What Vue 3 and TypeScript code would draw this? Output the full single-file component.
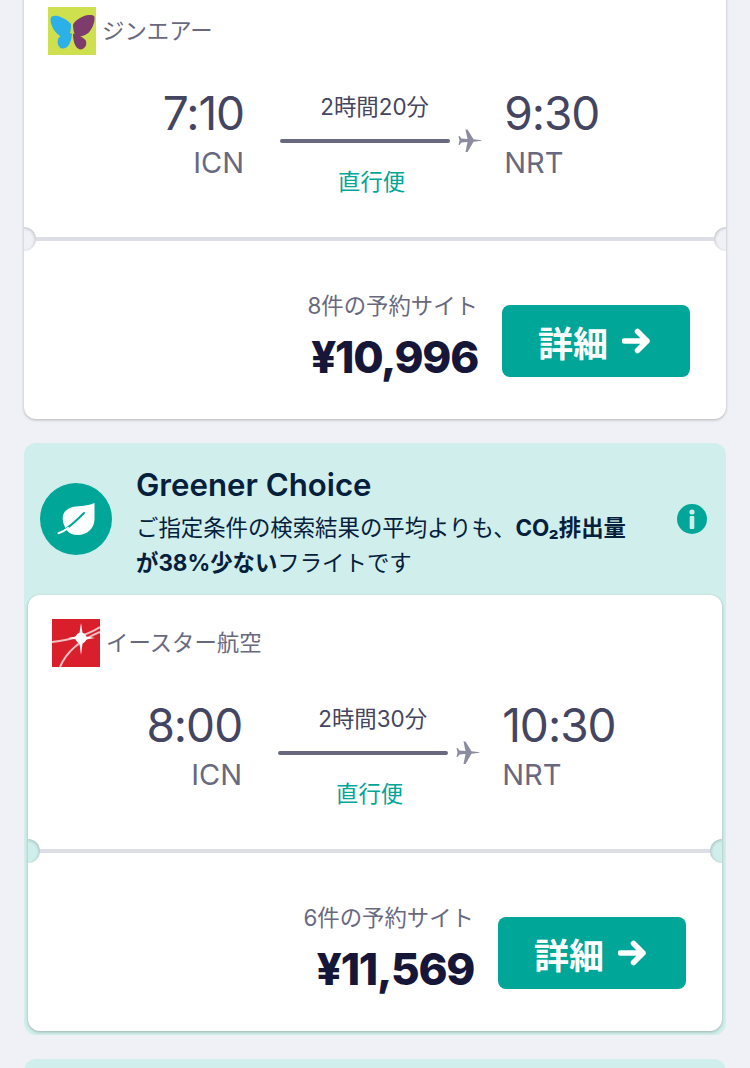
<script setup lang="ts">
type Flight = {
  logo: "jin" | "eastar";
  airline: string;
  depart: string;
  arrive: string;
  duration: string;
  sites: string;
  price: string;
  greener: boolean;
};

const flights: Flight[] = [
  {
    logo: "jin",
    airline: "ジンエアー",
    depart: "7:10",
    arrive: "9:30",
    duration: "2時間20分",
    sites: "8件の予約サイト",
    price: "¥10,996",
    greener: false,
  },
  {
    logo: "eastar",
    airline: "イースター航空",
    depart: "8:00",
    arrive: "10:30",
    duration: "2時間30分",
    sites: "6件の予約サイト",
    price: "¥11,569",
    greener: true,
  },
];
</script>

<template>
  <main class="page">
    <div class="results">
      <section v-for="f in flights" :key="f.airline" class="result" :class="{ greener: f.greener }">
        <header v-if="f.greener" class="green-head">
          <div class="leaf-badge">
            <svg width="72" height="72" viewBox="0 0 72 72" aria-hidden="true">
              <path d="M54.500 20V36C54.500 45.500 47 52 38 52C33 52 29.500 50.500 27 47.500C24.500 44 22.500 39.500 22.700 35C23 29 27 25.500 33 24C40 22.300 48 23.500 54.500 20Z" fill="#fff" />
              <path d="M44 30C38 36 32 42 25 46.500" fill="none" stroke="#00a698" stroke-width="2" stroke-linecap="round" />
              <path d="M18.500 50.200C22 49.200 25 47.500 28 45" fill="none" stroke="#fff" stroke-width="2" stroke-linecap="round" />
            </svg>
          </div>
          <div class="green-copy">
            <h2>Greener Choice</h2>
            <p>ご指定条件の検索結果の平均よりも、<b>CO₂排出量</b><b>が38%少ない</b>フライトです</p>
          </div>
          <svg class="info" width="30" height="30" viewBox="0 0 30 30" aria-hidden="true">
            <circle cx="15" cy="15" r="15" fill="#00a698" />
            <circle cx="15" cy="8" r="2.600" fill="#d0eeeb" />
            <rect x="12.700" y="12" width="4.600" height="13" rx="1" fill="#d0eeeb" />
          </svg>
        </header>

        <article class="ticket">
          <div class="ticket-top">
            <div class="airline">
              <svg v-if="f.logo === 'jin'" class="logo" width="48" height="48" viewBox="0 0 48 48">
                <rect width="48" height="48" fill="#cfe04e" />
                <path d="M2.500 12C2.500 9 6 8 10 9C15 10.500 20 13.500 23 17C23.500 21 22.500 26 20.500 29C16.500 30 12.500 30 10 27.500C6 24 2.500 18 2.500 12Z" fill="#2bb0e8" />
                <path d="M46.500 10C46 7.500 40 7.500 35 9.500C30 11.500 26.500 14.500 25 17.500C25 22 26 26.500 27.500 29C31.500 30 36 29 39.500 26.500C43.500 23.500 47 16 46.500 10Z" fill="#7c3d6c" />
                <path d="M24 26.500C19 25.500 13.500 27 10.500 31C8.500 35 10 40.500 14 41.500C19.500 42 23.500 36 24 26.500Z" fill="#2bb0e8" />
                <path d="M25 26.500C29 27.500 34.500 29.500 37.500 33C39.500 37 37.500 41.500 33 42.500C28 42.500 25 36 25 26.500Z" fill="#7c3d6c" />
              </svg>
              <svg v-else class="logo" width="48" height="48" viewBox="0 0 48 48">
                <rect width="48" height="48" fill="#d91f2b" />
                <path d="M0 23C16 21 34 17 48 8M8 48C14 34 26 22 48 13" fill="none" stroke="#f3c0c3" stroke-width="2" />
                <path d="M29 4L31 17L43 19L31 21L29 36L27 21L16 19L27 17Z" fill="#fff" />
                <circle cx="29" cy="19" r="5.500" fill="#fff" />
              </svg>
              <span>{{ f.airline }}</span>
            </div>

            <div class="route">
              <div class="stop end">
                <div class="time">{{ f.depart }}</div>
                <div class="code">ICN</div>
              </div>
              <div class="leg">
                <div class="duration">{{ f.duration }}</div>
                <div class="line-row">
                  <span class="line"></span>
                  <svg width="24" height="24" viewBox="0 0 24 24" aria-hidden="true">
                    <path d="M23.500 11.200L15.500 10.300L9.500 .5H7.500L9.500 10L3.500 9.600L1.500 7H.5L1.500 11.500L.5 16H1.500L3.500 13.400L9.500 13L7.500 23H9.500L15.500 12.700L23.500 11.800Z" fill="#8c8ca0" />
                  </svg>
                </div>
                <div class="direct">直行便</div>
              </div>
              <div class="stop">
                <div class="time">{{ f.arrive }}</div>
                <div class="code">NRT</div>
              </div>
            </div>
          </div>

          <div class="divider">
            <span class="notch left"></span>
            <span class="notch right"></span>
          </div>

          <div class="ticket-bottom">
            <div class="price-box">
              <div class="sites">{{ f.sites }}</div>
              <div class="price">{{ f.price }}</div>
            </div>
            <button type="button" class="select">
              詳細
              <svg width="28" height="26" viewBox="0 0 28 26" aria-hidden="true">
                <path d="M2.500 13H25M15.500 3.500L25 13L15.500 22.500" fill="none" stroke="#fff" stroke-width="5.500" stroke-linecap="round" stroke-linejoin="round" />
              </svg>
            </button>
          </div>
        </article>
      </section>

      <section class="result greener next"></section>
    </div>
  </main>
</template>

<style>
html,
body {
  margin: 0;
  overflow: hidden;
  background: #f0f1f6;
}
</style>

<style scoped>
.page {
  height: 1068px;
  overflow: hidden;
  padding: 0 24px;
  box-sizing: border-box;
  font-family: Inter, "Noto Sans CJK JP", sans-serif;
  color: #444560;
}

.results {
  margin-top: -17px;
  display: flex;
  flex-direction: column;
  gap: 24px;
}

.result.greener {
  background: #d0eeeb;
  border-radius: 12px;
  padding: 0 4px 4px;
}

.result.next {
  height: 100px;
}

.green-head {
  height: 152px;
  display: flex;
  align-items: center;
  gap: 24px;
  padding-left: 12px;
  position: relative;
  color: #05203c;
}

.leaf-badge {
  width: 72px;
  height: 72px;
  border-radius: 50%;
  background: #00a698;
  flex: 0 0 auto;
}

.leaf-badge svg {
  display: block;
}

.green-copy {
  width: 500px;
  margin-top: 8px;
}

.green-copy h2 {
  margin: 0 0 7px;
  font-size: 31.200px;
  line-height: 36px;
  font-weight: 600;
}

.green-copy p {
  margin: 0;
  font-size: 22.400px;
  line-height: 35px;
}

.green-copy b {
  font-weight: 700;
}

.info {
  position: absolute;
  left: 649px;
  top: 61px;
}

.ticket {
  background: #fff;
  border-radius: 12px;
  box-shadow: 0 1px 3px rgba(37, 32, 31, 0.3);
}

.ticket-top {
  height: 254px;
  padding: 24px 24px 0;
  box-sizing: border-box;
}

.airline {
  display: flex;
  align-items: center;
  gap: 6px;
  font-size: 22.400px;
  line-height: 48px;
  color: #68697f;
}

.logo {
  display: block;
  flex: 0 0 auto;
}

.route {
  margin-top: 30px;
  display: flex;
  justify-content: center;
  padding-left: 12px;
}

.stop {
  margin-left: 22px;
}

.stop.end {
  text-align: right;
  margin-left: 0;
  margin-right: 36px;
}

.time {
  font-size: 46px;
  line-height: 56px;
  font-weight: 400;
  letter-spacing: -1px;
  color: #444560;
}

.code {
  font-size: 29px;
  line-height: 40px;
  margin-top: 2px;
  color: #68697f;
}

.leg {
  width: 202px;
  text-align: center;
  font-size: 22.400px;
}

.duration {
  margin-top: 6px;
  padding-right: 13px;
  line-height: 32px;
  color: #444560;
}

.line-row {
  display: flex;
  align-items: center;
  gap: 8px;
  height: 24px;
  margin-top: 6px;
}

.line {
  width: 170px;
  height: 4px;
  border-radius: 2px;
  background: #68697f;
  flex: 0 0 auto;
}

.line-row svg {
  display: block;
  flex: 0 0 auto;
}

.direct {
  margin-top: 13px;
  padding-right: 19px;
  line-height: 32px;
  color: #00a698;
}

.divider {
  position: relative;
  height: 4px;
  margin: 0 12px;
  background: #dddde5;
}

.notch {
  position: absolute;
  top: -10px;
  width: 24px;
  height: 24px;
  border-radius: 50%;
  background: #f0f1f6;
}

.notch.left {
  left: -24px;
  clip-path: inset(-2px -2px -2px 12px);
  box-shadow: inset -1px 1px 3px rgba(37, 32, 31, 0.2);
}

.notch.right {
  right: -24px;
  clip-path: inset(-2px 12px -2px -2px);
  box-shadow: inset 1px 1px 3px rgba(37, 32, 31, 0.2);
}

.greener .notch {
  background: #d0eeeb;
}

.ticket-bottom {
  height: 178px;
  padding: 49px 36px 0 0;
  box-sizing: border-box;
  display: flex;
  justify-content: flex-end;
  align-items: flex-start;
  gap: 24px;
}

.price-box {
  text-align: right;
}

.sites {
  font-size: 22.400px;
  line-height: 32px;
  color: #68697f;
}

.price {
  font-size: 44px;
  line-height: 52px;
  margin-top: 9px;
  font-weight: 800;
  letter-spacing: -1.300px;
  color: #161639;
}

.select {
  width: 188px;
  height: 72px;
  margin-top: 15px;
  padding: 0 4px 0 0;
  border: 0;
  border-radius: 8px;
  background: #00a698;
  color: #fff;
  font-family: inherit;
  font-size: 35px;
  font-weight: 700;
  display: flex;
  align-items: center;
  justify-content: center;
  gap: 14px;
}
</style>
